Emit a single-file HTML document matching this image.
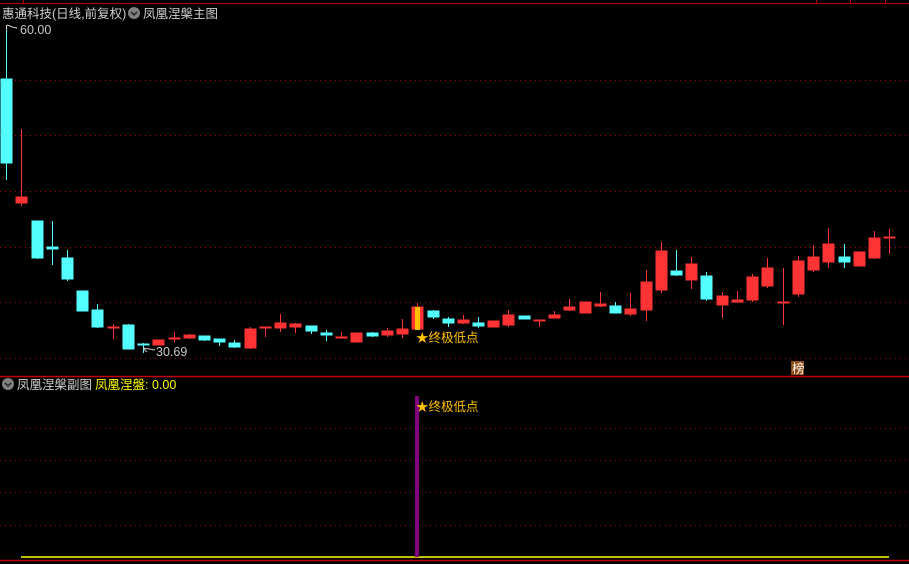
<!DOCTYPE html>
<html><head><meta charset="utf-8"><style>
html,body{margin:0;padding:0;background:#000;width:909px;height:564px;overflow:hidden}
svg{display:block}
text{font-family:"Liberation Sans","Noto Sans CJK SC",sans-serif;font-size:12.5px}
</style></head><body>
<svg width="909" height="564" viewBox="0 0 909 564" xmlns="http://www.w3.org/2000/svg">
<rect width="909" height="564" fill="#000"/>
<!-- top border -->
<line x1="0" y1="3.5" x2="909" y2="3.5" stroke="#c00000" stroke-width="1"/>
<line x1="23.5" y1="0" x2="23.5" y2="3" stroke="#c00000"/>
<line x1="816.5" y1="0" x2="816.5" y2="3" stroke="#c00000"/>
<line x1="850.5" y1="0" x2="850.5" y2="3" stroke="#c00000"/>
<line x1="885.5" y1="0" x2="885.5" y2="3" stroke="#c00000"/>
<!-- grid main -->
<g stroke="#a01010" stroke-width="1" stroke-dasharray="1,4">
<line x1="0" y1="80.5" x2="909" y2="80.5"/>
<line x1="0" y1="135.5" x2="909" y2="135.5"/>
<line x1="0" y1="191.5" x2="909" y2="191.5"/>
<line x1="0" y1="247.5" x2="909" y2="247.5"/>
<line x1="0" y1="302.5" x2="909" y2="302.5"/>
<line x1="0" y1="358.5" x2="909" y2="358.5"/>
<line x1="0" y1="428.5" x2="909" y2="428.5"/>
<line x1="0" y1="460.5" x2="909" y2="460.5"/>
<line x1="0" y1="492.5" x2="909" y2="492.5"/>
<line x1="0" y1="525.5" x2="909" y2="525.5"/>
</g>
<line x1="0" y1="376.5" x2="909" y2="376.5" stroke="#c00000" stroke-width="1.5"/>
<line x1="0" y1="560.5" x2="909" y2="560.5" stroke="#c00000" stroke-width="1.5"/>
<line x1="21" y1="557" x2="889" y2="557" stroke="#ffff00" stroke-width="1.5"/>
<rect x="415" y="396" width="4" height="161" fill="#800080"/>

<!-- candles -->
<g id="c" stroke-width="1">
<!-- cyan -->
<g fill="#54ffff" stroke="#54ffff">
<line x1="6.5" y1="27" x2="6.5" y2="180"/><rect x="1" y="79" width="11" height="84"/>
<line x1="37.5" y1="221" x2="37.5" y2="259"/><rect x="32" y="221" width="11" height="37"/>
<line x1="52.5" y1="221" x2="52.5" y2="265"/><rect x="47" y="247" width="11" height="2"/>
<line x1="67.5" y1="250" x2="67.5" y2="281"/><rect x="62" y="258" width="11" height="21"/>
<rect x="77" y="291" width="11" height="20"/>
<line x1="97.5" y1="304" x2="97.5" y2="328"/><rect x="92" y="310" width="11" height="17"/>
<line x1="128.5" y1="324" x2="128.5" y2="349"/><rect x="123" y="325" width="11" height="24"/>
<line x1="143.5" y1="343" x2="143.5" y2="353"/><rect x="138" y="344" width="11" height="1"/>
<rect x="199" y="336" width="11" height="4"/><line x1="204.5" y1="336" x2="204.5" y2="341"/>
<rect x="214" y="339" width="11" height="3"/><line x1="219.5" y1="339" x2="219.5" y2="346"/>
<rect x="229" y="343" width="11" height="4"/><line x1="234.5" y1="340" x2="234.5" y2="348"/>
<rect x="306" y="326" width="11" height="5"/><line x1="311.5" y1="326" x2="311.5" y2="334"/>
<rect x="321" y="333" width="11" height="2"/><line x1="326.5" y1="330" x2="326.5" y2="341"/>
<rect x="367" y="333" width="11" height="3"/><line x1="372.5" y1="332" x2="372.5" y2="337"/>
<rect x="428" y="311" width="11" height="6"/><line x1="433.5" y1="310" x2="433.5" y2="319"/>
<rect x="443" y="319" width="11" height="4"/><line x1="448.5" y1="317" x2="448.5" y2="327"/>
<rect x="473" y="323" width="11" height="3"/><line x1="478.5" y1="317" x2="478.5" y2="328"/>
<rect x="519" y="316" width="11" height="3"/>
<rect x="610" y="306" width="11" height="7"/><line x1="615.5" y1="302" x2="615.5" y2="313"/>
<rect x="671" y="271" width="11" height="4"/><line x1="676.5" y1="250" x2="676.5" y2="276"/>
<rect x="701" y="276" width="11" height="23"/><line x1="706.5" y1="272" x2="706.5" y2="301"/>
<rect x="839" y="257" width="11" height="5"/><line x1="844.5" y1="244" x2="844.5" y2="268"/>
</g>
<!-- red -->
<g fill="#ff3333" stroke="#ff3333">
<line x1="21.5" y1="129" x2="21.5" y2="206"/><rect x="16" y="197" width="11" height="6"/>
<line x1="113.5" y1="324" x2="113.5" y2="339"/><rect x="108" y="327" width="11" height="1"/>
<rect x="153" y="340" width="11" height="5"/>
<line x1="174.5" y1="332" x2="174.5" y2="342"/><rect x="169" y="338" width="11" height="1"/>
<line x1="189.5" y1="334" x2="189.5" y2="339"/><rect x="184" y="335" width="11" height="3"/>
<line x1="250.5" y1="327" x2="250.5" y2="349"/><rect x="245" y="329" width="11" height="19"/>
<line x1="265.5" y1="327" x2="265.5" y2="337"/><rect x="260" y="327" width="11" height="1"/>
<line x1="280.5" y1="314" x2="280.5" y2="332"/><rect x="275" y="323" width="11" height="5"/>
<line x1="295.5" y1="323" x2="295.5" y2="333"/><rect x="290" y="324" width="11" height="3"/>
<line x1="341.5" y1="332" x2="341.5" y2="338"/><rect x="336" y="337" width="11" height="1"/>
<rect x="351" y="333" width="11" height="9"/>
<line x1="387.5" y1="328" x2="387.5" y2="337"/><rect x="382" y="331" width="11" height="4"/>
<line x1="402.5" y1="319" x2="402.5" y2="338"/><rect x="397" y="329" width="11" height="5"/>
<line x1="417.5" y1="303" x2="417.5" y2="329"/><rect x="412" y="307" width="11" height="22"/>
<line x1="463.5" y1="315" x2="463.5" y2="324"/><rect x="458" y="320" width="11" height="3"/>
<rect x="488" y="321" width="11" height="6"/>
<line x1="508.5" y1="310" x2="508.5" y2="327"/><rect x="503" y="315" width="11" height="10"/>
<line x1="539.5" y1="320" x2="539.5" y2="327"/><rect x="534" y="320" width="11" height="1"/>
<line x1="554.5" y1="311" x2="554.5" y2="318"/><rect x="549" y="315" width="11" height="3"/>
<line x1="569.5" y1="299" x2="569.5" y2="311"/><rect x="564" y="307" width="11" height="3"/>
<rect x="580" y="302" width="11" height="11"/>
<line x1="600.5" y1="292" x2="600.5" y2="307"/><rect x="595" y="304" width="11" height="2"/>
<line x1="630.5" y1="293" x2="630.5" y2="316"/><rect x="625" y="309" width="11" height="5"/>
<line x1="646.5" y1="270" x2="646.5" y2="321"/><rect x="641" y="282" width="11" height="28"/>
<line x1="661.5" y1="242" x2="661.5" y2="293"/><rect x="656" y="251" width="11" height="39"/>
<line x1="691.5" y1="257" x2="691.5" y2="289"/><rect x="686" y="264" width="11" height="16"/>
<line x1="722.5" y1="292" x2="722.5" y2="318"/><rect x="717" y="296" width="11" height="9"/>
<line x1="737.5" y1="291" x2="737.5" y2="303"/><rect x="732" y="300" width="11" height="2"/>
<line x1="752.5" y1="274" x2="752.5" y2="302"/><rect x="747" y="277" width="11" height="23"/>
<line x1="767.5" y1="258" x2="767.5" y2="288"/><rect x="762" y="268" width="11" height="18"/>
<line x1="783.5" y1="268" x2="783.5" y2="325"/><rect x="778" y="302" width="11" height="1"/>
<line x1="798.5" y1="256" x2="798.5" y2="297"/><rect x="793" y="261" width="11" height="33"/>
<line x1="813.5" y1="245" x2="813.5" y2="272"/><rect x="808" y="257" width="11" height="13"/>
<line x1="828.5" y1="228" x2="828.5" y2="268"/><rect x="823" y="244" width="11" height="18"/>
<rect x="854" y="252" width="11" height="14"/>
<line x1="874.5" y1="231" x2="874.5" y2="259"/><rect x="869" y="238" width="11" height="20"/>
<line x1="889.5" y1="229" x2="889.5" y2="254"/><rect x="884" y="237" width="11" height="1"/>
</g>
<rect x="415" y="307" width="5" height="23" fill="#ffc000"/>
</g>

<!-- labels -->
<text x="2" y="18" fill="#d0d0d0">惠通科技(日线,前复权)</text>
<circle cx="134" cy="13" r="6" fill="#808080"/>
<path d="M131 12 L134 15 L137 12" stroke="#222" stroke-width="1.5" fill="none"/>
<text x="143" y="18" fill="#d0d0d0">凤凰涅槃主图</text>
<line x1="6.5" y1="25" x2="6.5" y2="30" stroke="#d0d0d0"/>
<path d="M7 25 L10 26 L12 27 L17 28" stroke="#d0d0d0" fill="none"/>
<text x="20" y="34" fill="#c8c8c8" font-size="12">60.00</text>
<path d="M143 348 L147 352 M143 348 L155 350" stroke="#c8c8c8" fill="none"/>
<text x="156" y="356" fill="#c8c8c8" font-size="12">30.69</text>
<text x="416" y="342" fill="#ffc000">★终极低点</text>
<rect x="791" y="361" width="13" height="14" fill="#8b4a10"/>
<text x="792" y="373" fill="#fff" font-size="11">榜</text>

<circle cx="8" cy="384" r="6" fill="#808080"/>
<path d="M5 383 L8 386 L11 383" stroke="#222" stroke-width="1.5" fill="none"/>
<text x="17" y="389" fill="#d0d0d0">凤凰涅槃副图</text>
<text x="95" y="389" fill="#ffff00">凤凰涅盤: 0.00</text>
<text x="416" y="411" fill="#ffc000">★终极低点</text>
</svg>
</body></html>
